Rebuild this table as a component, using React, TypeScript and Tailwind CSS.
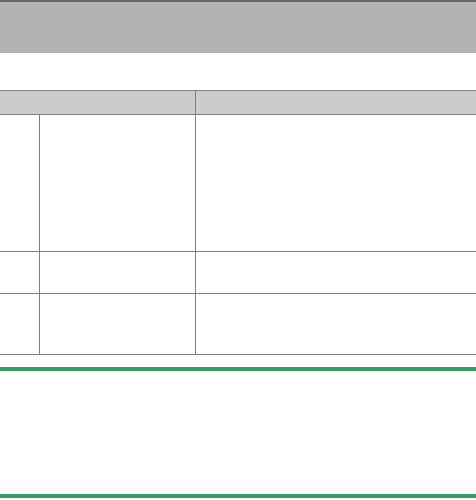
import React from 'react';

const rows = [137, 42, 61];

const App: React.FC = () => {
  return (
    <div className="min-h-[500px] w-[476px] bg-white font-['Liberation_Sans',sans-serif] overflow-hidden">
      {/* Title band */}
      <div className="h-[53px] border-t-2 border-[#666666] bg-[#b3b3b3]" />

      {/* Table */}
      <div className="mt-[37px] border-t border-[#808080]">
        <div className="flex h-[24px] border-b border-[#808080]">
          <div className="w-[196px] border-r border-[#808080] bg-[#cccccc]" />
          <div className="flex-1 bg-[#cccccc]" />
        </div>
        {rows.map((h, i) => (
          <div key={i} className="flex border-b border-[#808080]" style={{ height: h }}>
            <div className="w-[40px] border-r border-[#808080]" />
            <div className="w-[156px] border-r border-[#808080]" />
            <div className="flex-1" />
          </div>
        ))}
      </div>

      {/* Green rules */}
      <div className="mt-[12px] h-[4px] bg-[#339f66]" />
      <div className="mt-[123px] h-[4px] bg-[#339f66]" />
    </div>
  );
};

export default App;
